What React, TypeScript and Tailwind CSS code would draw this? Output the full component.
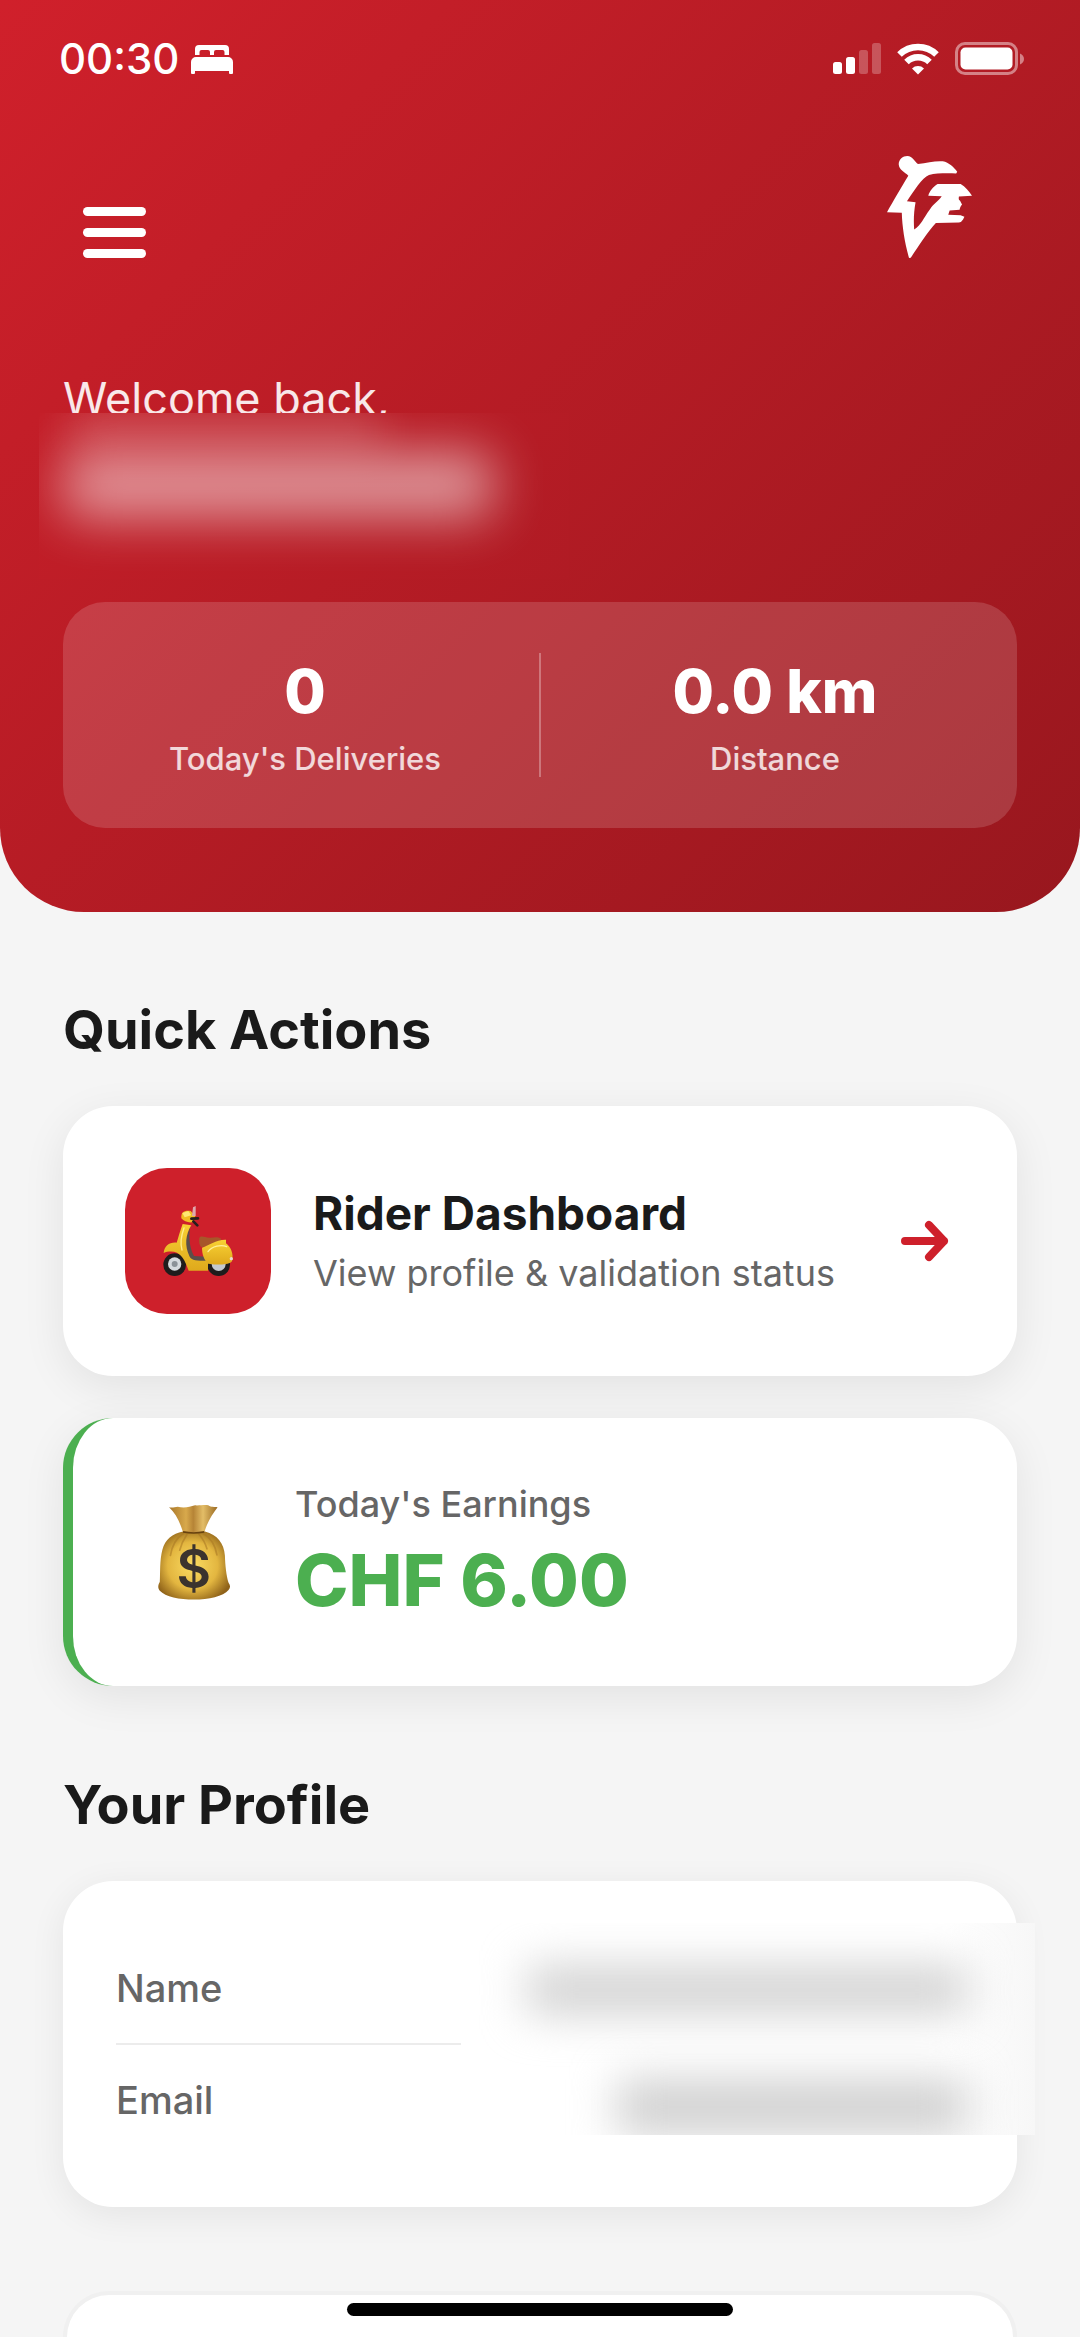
function BedIcon() {
  return (
    <svg viewBox="0 0 42 29" className="w-[42px] h-[29px] fill-white" aria-hidden="true">
      <path d="M4 10V4a4 4 0 0 1 4-4h26a4 4 0 0 1 4 4v6h-4.500V7a2 2 0 0 0-2-2H25a2 2 0 0 0-2 2v3h-4V7a2 2 0 0 0-2-2h-6.500a2 2 0 0 0-2 2v3z" />
      <path d="M0 28V17a5 5 0 0 1 5-5h32a5 5 0 0 1 5 5v11a1 1 0 0 1-1 1h-2a1 1 0 0 1-1-1v-2H4v2a1 1 0 0 1-1 1H1a1 1 0 0 1-1-1z" />
    </svg>
  );
}

function SignalIcon() {
  return (
    <svg viewBox="0 0 48 32" className="w-12 h-8 fill-white" aria-hidden="true">
      <rect x="0" y="19" width="9" height="12" rx="2.500" />
      <rect x="13" y="14" width="9" height="17" rx="2.500" />
      <rect x="26" y="7" width="9" height="24" rx="2.500" opacity="0.25" />
      <rect x="39" y="0" width="9" height="31" rx="2.500" opacity="0.25" />
    </svg>
  );
}

function WifiIcon() {
  return (
    <svg viewBox="0 0 42 32" className="w-[42px] h-8" fill="none" stroke="#fff" aria-hidden="true">
      <path d="M2.500 11.500a26.500 26.500 0 0 1 37 0" strokeWidth="6.500" />
      <path d="M9.500 19a16.500 16.500 0 0 1 23 0" strokeWidth="6.500" />
      <path d="M15 25.500a8.700 8.700 0 0 1 12 0L21 31.500z" fill="#fff" stroke="none" />
    </svg>
  );
}

function BatteryIcon() {
  return (
    <svg viewBox="0 0 70 34" className="w-[70px] h-[34px]" aria-hidden="true">
      <rect x="1.500" y="1.500" width="60" height="30" rx="8.500" fill="none" stroke="#fff" strokeOpacity="0.45" strokeWidth="3" />
      <rect x="5.500" y="5.500" width="52" height="22" rx="5" fill="#fff" />
      <path d="M65 11.500c2.500 1 4 3 4 5.500s-1.500 4.500-4 5.500z" fill="#fff" fillOpacity="0.45" />
    </svg>
  );
}

function Logo() {
  return (
    <svg viewBox="1008 468 247 305" preserveAspectRatio="none" className="w-[85px] h-[102px] fill-white" role="img" aria-label="Logo">
      <path d="M1042 493C1042 478 1054 468 1067 468C1083 469 1088 484 1098 492C1125 489 1148 482 1170 484C1188 487 1203 503 1212 515L1209 520C1175 520 1150 519 1130 525C1110 533 1086 573 1066 603L1091 606C1086 635 1085 660 1087 688C1108 674 1113 655 1133 627C1143 610 1158 602 1167 588L1128 587C1132 572 1143 560 1155 552L1222 552C1235 560 1247 574 1255 587L1217 589C1216 595 1216 600 1220 601L1226 613C1222 618 1220 622 1219 629L1190 631L1186 644L1222 645L1233 650L1229 658Q1224 667 1217 667L1150 668C1125 695 1095 745 1077 772L1072 773C1060 730 1052 680 1051 638L1008 636C1025 605 1050 560 1070 527C1060 516 1043 511 1042 493Z" />
    </svg>
  );
}

function ScooterIcon() {
  return (
    <svg viewBox="150 165 216 216" className="w-[72px] h-[72px]" aria-hidden="true">
      <defs>
        <linearGradient id="scooterBody" x1="0" y1="0" x2="0" y2="1">
          <stop offset="0" stopColor="#f8d234" />
          <stop offset="1" stopColor="#dfa91c" />
        </linearGradient>
      </defs>
      <circle cx="188" cy="344" r="34" fill="#1f1c1c" />
      <circle cx="188" cy="342" r="20" fill="#d5dade" />
      <circle cx="188" cy="342" r="9" fill="#8b9298" />
      <circle cx="320" cy="344" r="34" fill="#1f1c1c" />
      <circle cx="320" cy="342" r="21" fill="#c4c9ce" />
      <path d="M236 222C230 250 230 290 246 318L284 320V342H226L214 290Z" fill="#5b4f4a" />
      <path d="M212 222L238 226C220 254 218 288 232 318C237 330 248 333 288 332V362H230C222 340 214 318 195 308C183 303 166 304 155 309C157 288 172 276 194 278C200 258 206 238 212 222Z" fill="url(#scooterBody)" />
      <path d="M216 234C208 256 204 280 210 300" fill="none" stroke="#ffee8e" strokeWidth="4" strokeLinecap="round" />
      <path d="M262 264C266 255 278 262 292 263C306 264 318 258 329 268L302 286L268 292C262 286 260 274 262 264Z" fill="#a7562a" />
      <path d="M270 293C292 286 312 268 342 269L342 280C356 290 366 312 360 334C352 346 318 345 288 341C276 330 270 312 270 293Z" fill="url(#scooterBody)" />
      <path d="M288 305C300 288 328 283 344 290" fill="none" stroke="#fff09a" strokeWidth="4" strokeLinecap="round" />
      <path d="M208 205C206 186 218 180 236 183L250 199L241 217C228 219 216 214 208 205Z" fill="#f2bd23" />
      <path d="M211 189L229 183L238 196L218 202Z" fill="#ffe873" />
      <path d="M238 206L258 205M244 214L256 226" stroke="#27201d" strokeWidth="8" strokeLinecap="round" />
      <path d="M243 172L251 168V198H240Z" fill="#dfa8ad" />
      <circle cx="358" cy="326" r="5" fill="#e8d9d4" />
    </svg>
  );
}

function MoneyBagIcon() {
  return (
    <svg viewBox="348 315 222 292" className="w-[74px] h-[97px]" aria-hidden="true">
      <defs>
        <radialGradient id="bagBody" cx="0.48" cy="0.5" r="0.58">
          <stop offset="0" stopColor="#fbdc62" />
          <stop offset="0.6" stopColor="#e3b640" />
          <stop offset="1" stopColor="#8f6219" />
        </radialGradient>
        <linearGradient id="bagNeck" x1="0" y1="0" x2="1" y2="0">
          <stop offset="0" stopColor="#a9772a" />
          <stop offset="0.35" stopColor="#d8a94c" />
          <stop offset="0.5" stopColor="#b68436" />
          <stop offset="0.7" stopColor="#e3bd67" />
          <stop offset="1" stopColor="#9a6a23" />
        </linearGradient>
      </defs>
      <path d="M426 398H492C530 408 549 434 552 470C553 500 556 530 563 552C569 560 569 567 563 574C532 612 390 612 356 576C349 568 351 558 356 550C358 520 355 486 364 452C372 422 394 404 426 398Z" fill="url(#bagBody)" />
      <path d="M427 404C402 420 392 446 388 470M487 404C514 420 524 446 528 468M438 406C426 424 420 438 416 454M474 406C486 420 494 436 498 450" fill="none" stroke="#a87722" strokeWidth="5" strokeOpacity="0.55" strokeLinecap="round" />
      <path d="M384 325C394 327 402 324 410 323C428 328 446 324 462 319C478 320 492 316 502 319C512 326 520 323 530 325C516 344 500 366 490 400C470 404 446 404 426 400C416 368 404 344 384 325Z" fill="url(#bagNeck)" />
      <path d="M426 399C446 403 470 403 490 399" fill="none" stroke="#67420f" strokeWidth="5" />
      <text x="458" y="567" textAnchor="middle" fontFamily="Inter, sans-serif" fontSize="160" fontWeight="600" fill="#3b332e">
        $
      </text>
    </svg>
  );
}

function ArrowIcon() {
  return (
    <svg viewBox="0 0 48 42" className="w-12 h-[42px] shrink-0" fill="none" stroke="#ce202b" strokeWidth="8" strokeLinecap="round" strokeLinejoin="round" aria-hidden="true">
      <path d="M4 21h39M28 5L43 21L28 37" />
    </svg>
  );
}

function Stat({ value, label }: { value: string; label: string }) {
  return (
    <div className="flex-1 text-center">
      <p className="text-[60px] leading-[76px] font-extrabold">{value}</p>
      <p className="mt-3 text-[31px] leading-9 font-medium text-white/80">{label}</p>
    </div>
  );
}

function ProfileRow({ label }: { label: string }) {
  return (
    <div className="flex items-center h-[110px]">
      <dt className="text-[38px] leading-12 font-medium text-[#666]">{label}</dt>
      <dd />
    </div>
  );
}

export default function App() {
  return (
    <div className="relative min-h-screen flex flex-col bg-[#f5f5f5] text-[#1a1a1a] overflow-hidden font-['Inter','Liberation_Sans',sans-serif]">
      <header className="px-[63px] pt-[34px] pb-[84px] rounded-b-[84px] text-white bg-linear-135 from-[#d0202b] to-[#98171e]">
        {/* Status bar */}
        <div className="flex items-center justify-between h-[50px] -ml-1 -mr-2">
          <div className="flex items-center gap-3">
            <span className="text-[42px] leading-[50px] font-medium">00:30</span>
            <BedIcon />
          </div>
          <div className="flex items-center gap-4">
            <SignalIcon />
            <WifiIcon />
            <BatteryIcon />
          </div>
        </div>

        <nav className="flex items-end justify-between mt-[72px] pl-5 pr-[45px]">
          <button type="button" aria-label="Open menu" className="flex flex-col gap-3 cursor-pointer">
            <span className="w-[63px] h-[9px] rounded-full bg-white" />
            <span className="w-[63px] h-[9px] rounded-full bg-white" />
            <span className="w-[63px] h-[9px] rounded-full bg-white" />
          </button>
          <Logo />
        </nav>

        <div className="relative mt-[115px] h-[142px]">
          <p className="text-[45px] leading-[52px] text-white/90">Welcome back,</p>
          {/* Hidden rider name */}
          <div className="absolute top-10 -left-6 w-[530px] h-[166px] overflow-hidden bg-linear-135 from-[#c41e28] to-[#b01b24]">
            <div className="ml-8 h-8 w-[310px] bg-white/20 blur-[22px]" />
            <div className="ml-6 mt-2 h-[64px] w-[430px] rounded-2xl bg-white/55 blur-[26px]" />
          </div>
        </div>

        {/* Stats */}
        <div className="flex mt-[87px] px-2 py-[51px] rounded-[42px] bg-white/15">
          <Stat value="0" label="Today's Deliveries" />
          <div className="w-[2px] bg-white/30" />
          <Stat value="0.0 km" label="Distance" />
        </div>
      </header>

      <main className="flex flex-col flex-1 px-[63px]">
        <h2 className="mt-[86px] mb-11 text-[54px] leading-16 font-bold">Quick Actions</h2>

        <a href="#dashboard" className="flex items-center py-[62px] pl-[62px] pr-[68px] rounded-[50px] bg-white shadow-[0_11px_44px_rgba(0,0,0,0.08)]">
          <div className="w-[146px] h-[146px] shrink-0 rounded-[42px] bg-[#ce202b] flex items-center justify-center">
            <ScooterIcon />
          </div>
          <div className="flex-1 ml-[42px]">
            <h3 className="text-[46px] leading-14 font-bold">Rider Dashboard</h3>
            <p className="mt-2 text-[36px] leading-12 text-[#666]">View profile &amp; validation status</p>
          </div>
          <ArrowIcon />
        </a>

        <section className="flex items-center mt-[42px] py-16 pl-[84px] pr-16 rounded-[50px] bg-white border-l-[10px] border-[#4caf50] shadow-[0_11px_44px_rgba(0,0,0,0.08)]">
          <MoneyBagIcon />
          <div className="ml-16">
            <p className="text-[36px] leading-11 font-medium text-[#666]">Today's Earnings</p>
            <p className="mt-3 text-[72px] leading-[84px] font-extrabold text-[#4caf50]">CHF 6.00</p>
          </div>
        </section>

        <h2 className="mt-[87px] mb-11 text-[54px] leading-16 font-bold">Your Profile</h2>

        <section className="relative px-[53px] py-[52px] rounded-[50px] bg-white shadow-[0_8px_36px_rgba(0,0,0,0.07)]">
          <dl>
            <ProfileRow label="Name" />
            <div className="h-[2px] bg-[#ececec]" />
            <ProfileRow label="Email" />
          </dl>
          {/* Hidden name and email */}
          <div className="absolute top-[42px] left-[398px] -right-[18px] h-[212px] pt-[42px] pr-[68px] flex flex-col items-end gap-16 overflow-hidden bg-linear-to-r from-white from-85% to-[#f7f7f7]">
            <div className="w-[440px] h-[50px] shrink-0 bg-[#d3d3d3] blur-[22px]" />
            <div className="w-[350px] h-[56px] shrink-0 bg-[#d0d0d0] blur-[22px]" />
          </div>
        </section>

        <section className="flex-1 min-h-11 mt-[84px] rounded-t-[50px] bg-white border-4 border-b-0 border-[#f0f0f0]" />
      </main>

      {/* Home indicator */}
      <div className="absolute bottom-[21px] left-1/2 -translate-x-1/2 w-[386px] h-[13px] rounded-full bg-black" />
    </div>
  );
}
